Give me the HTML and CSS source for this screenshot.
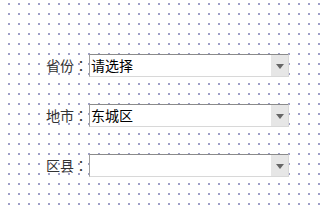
FILE: index.html
```html
<!DOCTYPE html>
<html lang="zh-CN">
<head>
    <meta charset="UTF-8">
    <title>省市区选择</title>
    <link rel="stylesheet" href="styles.css">
</head>
<body>
    <form class="region-form">
        <div class="field">
            <label class="field-label">省份<span class="colon" lang="ja">：</span></label>
            <div class="combo">
                <span class="combo-text">请选择</span>
                <span class="combo-arrow"></span>
            </div>
        </div>
        <div class="field">
            <label class="field-label">地市<span class="colon" lang="ja">：</span></label>
            <div class="combo">
                <span class="combo-text">东城区</span>
                <span class="combo-arrow"></span>
            </div>
        </div>
        <div class="field">
            <label class="field-label">区县<span class="colon" lang="ja">：</span></label>
            <div class="combo">
                <span class="combo-text"></span>
                <span class="combo-arrow"></span>
            </div>
        </div>
    </form>
</body>
</html>
```

FILE: styles.css
```css
html, body {
    margin: 0;
    height: 100%;
}
body {
    font-family: "Noto Sans CJK SC", "Liberation Sans", sans-serif;
    font-size: 14px;
    background-color: #fff;
    background-image: radial-gradient(circle, #5a5aa0 0.5px, transparent 1px);
    background-size: 10px 10px;
    background-position: 4px -1px;
}
.region-form {
    display: flex;
    flex-direction: column;
    gap: 27px;
    padding: 54px 0 0 46px;
    margin: 0;
}
.field {
    display: flex;
    align-items: center;
    height: 23px;
}
.field-label {
    width: 43px;
    color: #333;
    line-height: 23px;
    white-space: nowrap;
}
.colon {
    font-family: "Noto Sans CJK JP", "Noto Sans CJK SC", sans-serif;
}
.combo {
    display: flex;
    width: 200px;
    height: 23px;
    box-sizing: border-box;
    background: #fff;
    border-top: 1px solid #8a8a8a;
    border-left: 1px solid #a0a0a0;
    border-right: 1px solid #d8d8d8;
    border-bottom: 1px solid #d8d8d8;
}
.combo-text {
    flex: 1;
    padding-left: 1px;
    color: #000;
    line-height: 21px;
}
.combo-arrow {
    width: 17px;
    background: #e6e6e6;
    display: flex;
    align-items: center;
    justify-content: center;
}
.combo-arrow::after {
    content: "";
    width: 0;
    height: 0;
    border-left: 4px solid transparent;
    border-right: 4px solid transparent;
    border-top: 5px solid #666;
    margin-top: 1px;
}
```
